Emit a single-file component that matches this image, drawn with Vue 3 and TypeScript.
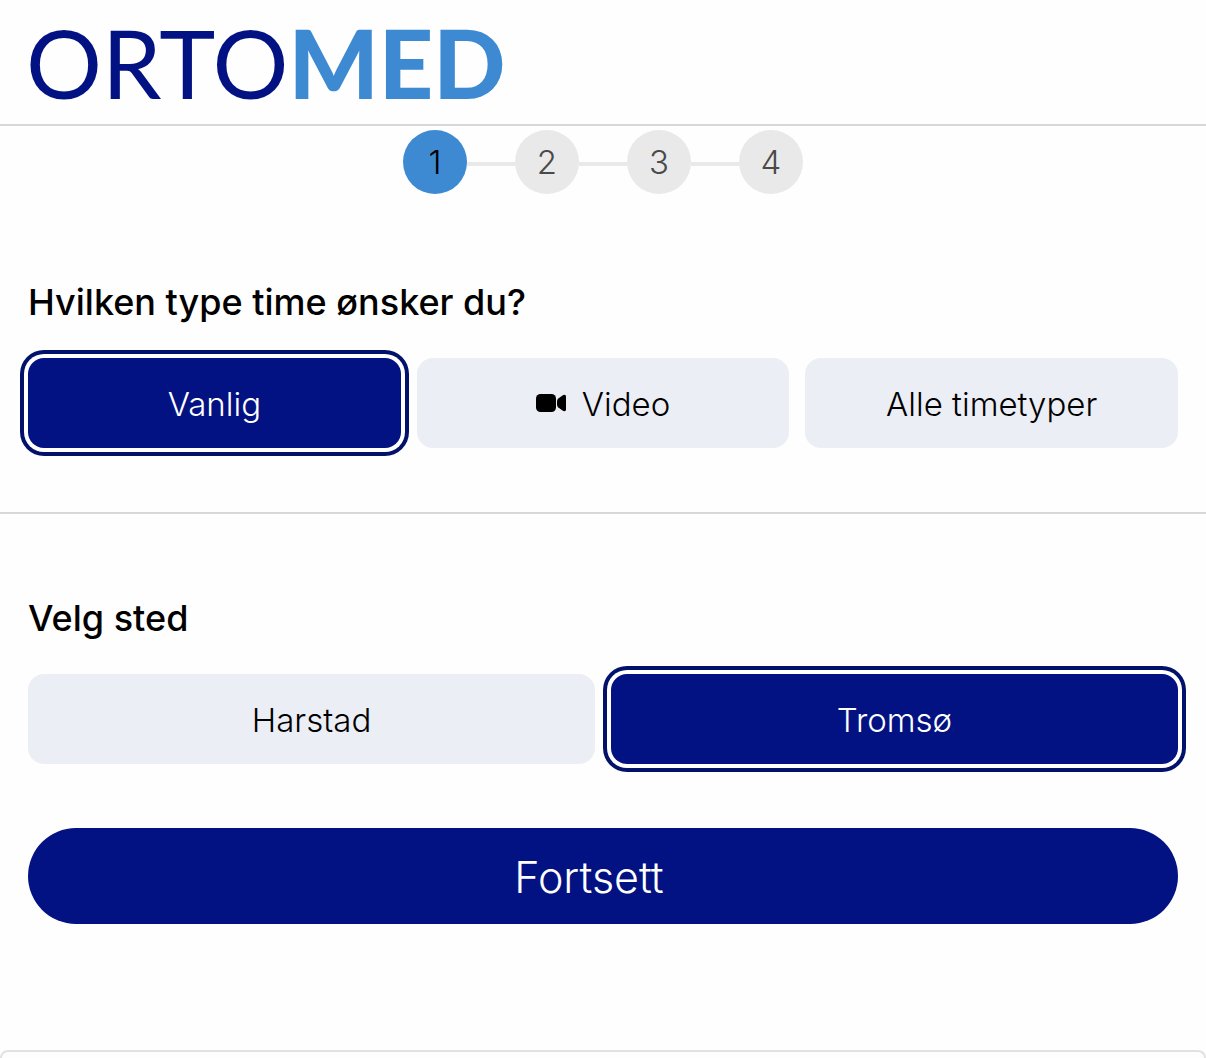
<script setup lang="ts">
import { ref } from 'vue'

const steps: number[] = [1, 2, 3, 4]
const currentStep = ref(1)

const types = [
  { id: 'vanlig', label: 'Vanlig', video: false },
  { id: 'video', label: 'Video', video: true },
  { id: 'alle', label: 'Alle timetyper', video: false },
]
const places = ['Harstad', 'Tromsø']

const selectedType = ref('vanlig')
const selectedPlace = ref('Tromsø')
</script>

<template>
  <div class="page">
    <header class="header">
      <a class="logo" href="#"><span class="orto">ORTO</span><span class="med">MED</span></a>
    </header>

    <main>
      <ol class="steps">
        <li
          v-for="step in steps"
          :key="step"
          class="step"
          :class="{ active: step === currentStep }"
          :aria-current="step === currentStep ? 'step' : undefined"
        >
          <span class="circle">{{ step }}</span>
        </li>
      </ol>

      <section class="block first">
        <h2>Hvilken type time ønsker du?</h2>
        <div class="options">
          <button
            v-for="type in types"
            :key="type.id"
            type="button"
            class="option"
            :class="{ selected: type.id === selectedType }"
            :aria-pressed="type.id === selectedType"
            @click="selectedType = type.id"
          >
            <svg v-if="type.video" class="camera" viewBox="0 0 30 18" aria-hidden="true">
              <rect width="20" height="18" rx="4.5" />
              <path d="M21 7.2 Q21 5.6 22.3 4.6 L26.5 1.5 Q28 .5 29.2 1 Q30 1.4 30 2.5 V15.5 Q30 16.6 29.2 17 Q28 17.5 26.5 16.5 L22.3 13.4 Q21 12.4 21 10.8 Z" />
            </svg>
            <span>{{ type.label }}</span>
          </button>
        </div>
      </section>

      <section class="block second">
        <h2>Velg sted</h2>
        <div class="options">
          <button
            v-for="place in places"
            :key="place"
            type="button"
            class="option"
            :class="{ selected: place === selectedPlace }"
            :aria-pressed="place === selectedPlace"
            @click="selectedPlace = place"
          >
            <span>{{ place }}</span>
          </button>
        </div>
        <button type="button" class="continue">Fortsett</button>
      </section>

      <section class="panel"></section>
    </main>
  </div>
</template>

<style>
body {
  background: #fefefe;
}
</style>

<style scoped>
.page {
  font-family: Inter, 'Liberation Sans', sans-serif;
  color: #000;
}

.header {
  display: flex;
  align-items: center;
  height: 124px;
  padding: 0 26px;
  border-bottom: 2px solid #d8d8d8;
}

.logo {
  display: flex;
  align-items: baseline;
  font-family: Lato, sans-serif;
  font-size: 95px;
  line-height: 124px;
  text-decoration: none;
}

.orto {
  color: #021282;
}

.med {
  color: #3d8ad3;
  font-weight: 900;
}

.steps {
  display: flex;
  justify-content: center;
  margin: 0;
  padding: 4px 0 0;
  list-style: none;
}

.step {
  display: flex;
  align-items: center;
}

.step + .step::before {
  content: '';
  width: 48px;
  height: 4px;
  margin-top: 4px;
  background: #e9e9e9;
}

.circle {
  display: flex;
  align-items: center;
  justify-content: center;
  width: 64px;
  height: 64px;
  border-radius: 50%;
  background: #e9e9e9;
  color: #4a4a4a;
  font-size: 33px;
  font-weight: 300;
}

.active .circle {
  background: #3d8ad3;
  color: #000;
}

.block {
  padding: 84px 28px 64px;
}

.first {
  border-bottom: 2px solid #d8d8d8;
}

.second {
  padding-top: 80px;
}

h2 {
  margin: 0 0 32px;
  font-size: 36px;
  font-weight: 500;
  line-height: 48px;
}

.options {
  display: flex;
  gap: 16px;
}

.option {
  display: flex;
  flex: 1 1 0;
  align-items: center;
  justify-content: center;
  gap: 16px;
  height: 90px;
  padding: 2px 0 0;
  border: 0;
  border-radius: 16px;
  background: #eceef6;
  color: #000;
  font-family: inherit;
  font-size: 33px;
  font-weight: 300;
  line-height: 48px;
}

.option.selected {
  background: #021282;
  color: #fff;
  box-shadow: 0 0 0 4px #fff, 0 0 0 8px #02126a;
}

.camera {
  width: 30px;
  height: 18px;
  margin-bottom: 2px;
}

.continue {
  width: 100%;
  height: 96px;
  margin-top: 64px;
  padding: 2px 28px 0 0;
  border: 0;
  border-radius: 48px;
  background: #021282;
  color: #fff;
  font-family: inherit;
  font-size: 43px;
  font-weight: 300;
}

.panel {
  height: 6px;
  margin-top: 62px;
  border: 2px solid #e2e2e2;
  border-bottom: 0;
  border-radius: 8px 8px 0 0;
}
</style>
